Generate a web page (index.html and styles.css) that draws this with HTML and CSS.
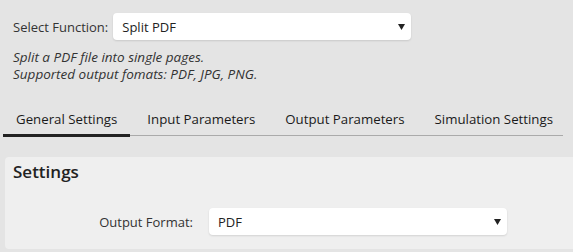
FILE: index.html
```html
<!DOCTYPE html>
<html lang="en">
<head>
    <meta charset="UTF-8">
    <meta name="viewport" content="width=device-width, initial-scale=1.0">
    <title>PDF Tools</title>
    <link rel="stylesheet" href="styles.css">
</head>
<body>

    <div class="function-row">
        <label class="function-label">Select Function:</label>
        <div class="select select-function">
            <span>Split PDF</span>
            <svg class="arrow" width="7" height="6" viewBox="0 0 7 6"><path d="M0 0H7L3.5 6Z" fill="#222"/></svg>
        </div>
    </div>

    <p class="description">
        Split a PDF file into single pages.<br>
        Supported output fomats: PDF, JPG, PNG.
    </p>

    <ul class="tabs">
        <li class="tab active">General Settings</li>
        <li class="tab">Input Parameters</li>
        <li class="tab">Output Parameters</li>
        <li class="tab">Simulation Settings</li>
    </ul>

    <div class="panel">
        <h2>Settings</h2>
        <div class="form-row">
            <label class="form-label">Output Format:</label>
            <div class="select select-format">
                <span>PDF</span>
                <svg class="arrow" width="7" height="6" viewBox="0 0 7 6"><path d="M0 0H7L3.5 6Z" fill="#222"/></svg>
            </div>
        </div>
    </div>

</body>
</html>
```

FILE: styles.css
```css
body {
    font-family: 'Open Sans', 'Liberation Sans', sans-serif;
    font-size: 13px;
    background-color: #e4e4e4;
    color: #333;
    margin: 0;
    padding: 0;
    overflow: hidden;
    white-space: nowrap;
}

.function-row {
    display: flex;
    align-items: center;
    padding: 13px 0 0 13px;
}

.function-label {
    margin-right: 5px;
}

.select {
    display: flex;
    align-items: center;
    justify-content: space-between;
    box-sizing: border-box;
    height: 27px;
    padding: 0 6px 0 9px;
    background-color: #fff;
    border-radius: 4px;
    box-shadow: 0 1px 2px rgba(0, 0, 0, 0.12);
    color: #222;
}

.select-function {
    width: 298px;
}

.arrow {
    display: block;
}

.description {
    font-style: italic;
    font-size: 13.5px;
    line-height: 17px;
    margin: 9px 0 0 13px;
}

.tabs {
    display: flex;
    list-style: none;
    margin: 24px 10px 0 3px;
    padding: 0;
    border-bottom: 1px solid #aaa;
}

.tab {
    padding: 3px 13px 6px;
    margin-right: 4px;
    font-size: 13.25px;
    color: #1a1a1a;
    cursor: pointer;
}

.tab.active {
    border-bottom: 3px solid #222;
    margin-bottom: -2px;
}

.panel {
    margin: 21px 0 0 5px;
    height: 92px;
    background-color: #efefef;
    border-radius: 4px 0 0 4px;
    padding: 0 8px;
}

.panel h2 {
    margin: 0;
    padding-top: 3px;
    font-size: 17px;
    font-weight: 600;
    color: #222;
}

.form-row {
    display: flex;
    align-items: center;
    margin-top: 25px;
}

.form-label {
    width: 180px;
    text-align: right;
    margin-right: 16px;
}

.select-format {
    width: 298px;
}
```
